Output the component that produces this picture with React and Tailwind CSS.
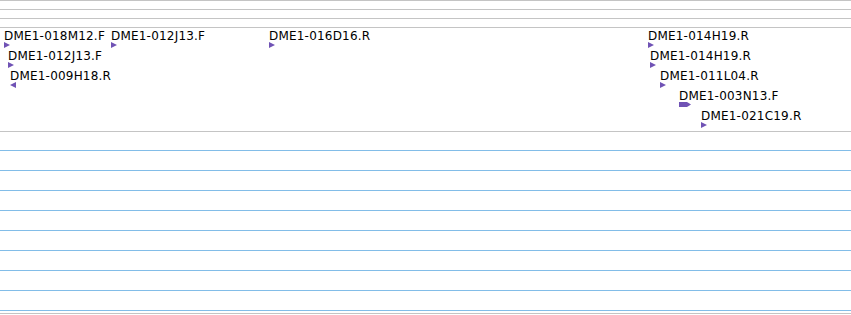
import React from "react";

const rows = [
  [
    { x: 4, label: "DME1-018M12.F", dir: "r" },
    { x: 111, label: "DME1-012J13.F", dir: "r" },
    { x: 269, label: "DME1-016D16.R", dir: "r" },
    { x: 648, label: "DME1-014H19.R", dir: "r" },
  ],
  [
    { x: 8, label: "DME1-012J13.F", dir: "r" },
    { x: 650, label: "DME1-014H19.R", dir: "r" },
  ],
  [
    { x: 10, label: "DME1-009H18.R", dir: "l" },
    { x: 660, label: "DME1-011L04.R", dir: "r" },
  ],
  [{ x: 679, label: "DME1-003N13.F", dir: "bar" }],
  [{ x: 701, label: "DME1-021C19.R", dir: "r" }],
];

function Glyph({ dir }) {
  if (dir === "bar") {
    return (
      <svg width="13" height="6" viewBox="0 0 13 6" className="block">
        <polygon points="0,0 8,0 12,2.5 8,5 0,5" fill="#7053b5" />
      </svg>
    );
  }
  if (dir === "l") {
    return (
      <svg width="6" height="6" viewBox="0 0 6 6" className="block">
        <polygon points="6,0 0,3 6,6" fill="#7053b5" />
      </svg>
    );
  }
  return (
    <svg width="6" height="6" viewBox="0 0 6 6" className="block">
      <polygon points="0,0 6,3 0,6" fill="#7053b5" />
    </svg>
  );
}

function Feature({ f, row }) {
  return (
    <div
      className="absolute flex flex-col"
      style={{ left: f.x, top: 2 + row * 20 }}
    >
      <span className="whitespace-nowrap text-[12px] leading-[12px] tracking-[0.2px] text-black">
        {f.label}
      </span>
      <Glyph dir={f.dir} />
    </div>
  );
}

export default function App() {
  return (
    <div
      className="w-[851px] h-[315px] bg-white overflow-hidden flex flex-col"
      style={{ fontFamily: '"DejaVu Sans", sans-serif' }}
    >
      <div className="h-px bg-[#c4c4c4]" />
      <div className="h-[8px]" />
      <div className="h-px bg-[#c4c4c4]" />
      <div className="h-[8px]" />
      <div className="h-px bg-[#c4c4c4]" />
      <div className="h-[8px]" />
      <div className="h-px bg-[#c4c4c4]" />
      <div className="relative h-[103px]">
        {rows.map((r, i) =>
          r.map((f, j) => <Feature key={i + "-" + j} f={f} row={i} />)
        )}
      </div>
      <div className="h-px bg-[#c4c4c4]" />
      <div className="flex flex-col pt-[18px] gap-[19px]">
        {Array.from({ length: 9 }).map((_, i) => (
          <div key={i} className="h-px bg-[#82bde8]" />
        ))}
      </div>
      <div className="h-[2px]" />
      <div className="h-px bg-[#c4c4c4]" />
    </div>
  );
}
